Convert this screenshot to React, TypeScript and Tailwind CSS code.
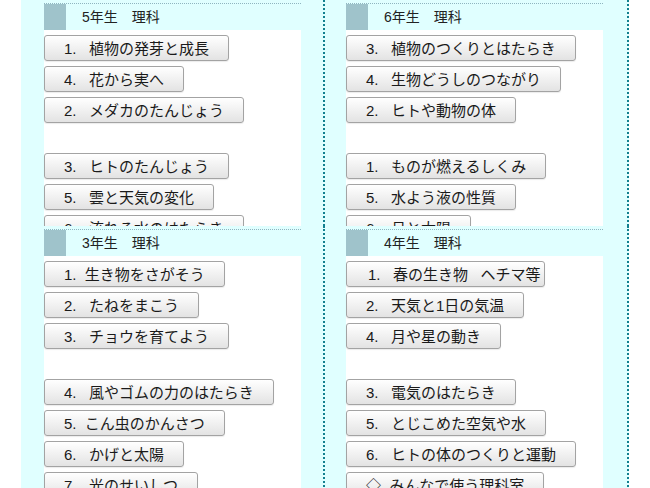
import React from "react";

type Item = { label: string; extra?: string };

type Panel = {
  title: string;
  groups: Item[][];
};

const panels: Panel[] = [
  {
    title: "5年生　理科",
    groups: [
      [
        { label: "1.   植物の発芽と成長" },
        { label: "4.   花から実へ" },
        { label: "2.   メダカのたんじょう" },
      ],
      [
        { label: "3.   ヒトのたんじょう" },
        { label: "5.   雲と天気の変化" },
        { label: "6.   流れる水のはたらき" },
        { label: "7.   もののとけ方" },
      ],
    ],
  },
  {
    title: "6年生　理科",
    groups: [
      [
        { label: "3.   植物のつくりとはたらき" },
        { label: "4.   生物どうしのつながり" },
        { label: "2.   ヒトや動物の体" },
      ],
      [
        { label: "1.   ものが燃えるしくみ" },
        { label: "5.   水よう液の性質" },
        { label: "6.   月と太陽" },
        { label: "7.   大地のつくり" },
      ],
    ],
  },
  {
    title: "3年生　理科",
    groups: [
      [
        { label: "1.  生き物をさがそう" },
        { label: "2.   たねをまこう" },
        { label: "3.   チョウを育てよう" },
      ],
      [
        { label: "4.   風やゴムの力のはたらき" },
        { label: "5.  こん虫のかんさつ" },
        { label: "6.   かげと太陽" },
        { label: "7.   光のせいしつ" },
      ],
    ],
  },
  {
    title: "4年生　理科",
    groups: [
      [
        { label: "1.   春の生き物   ヘチマ等", extra: "w-[199px] justify-start pl-[21px] pr-0" },
        { label: "2.   天気と1日の気温" },
        { label: "4.   月や星の動き" },
      ],
      [
        { label: "3.   電気のはたらき" },
        { label: "5.   とじこめた空気や水" },
        { label: "6.   ヒトの体のつくりと運動" },
        { label: "◇  みんなで使う理科室" },
      ],
    ],
  },
];

const SubjectButton = ({ item }: { item: Item }) => (
  <button
    className={
      "flex h-[26px] shrink-0 items-center justify-center whitespace-pre rounded-[3px] border border-[#a3a3a3] bg-linear-to-b from-white to-[#e3e3e3] px-[19px] text-[15px] leading-none text-[#1a1a1a] shadow-[0_1px_1px_rgba(0,0,0,0.08)] " +
      (item.extra ?? "")
    }
  >
    {item.label}
  </button>
);

const PanelBox = ({ panel, right, tall }: { panel: Panel; right: boolean; tall: boolean }) => (
  <div
    className={
      "overflow-hidden bg-[#e0ffff] pt-[3px] " +
      (tall ? "h-[300px] " : "h-[226px] ") +
      (right
        ? "border-x-2 border-dotted border-[#12808f] pl-[21px] pr-[24px]"
        : "pl-[23px] pr-[22px]")
    }
  >
    <div className="flex h-[27px] items-stretch border-t border-dotted border-[#8fb5c0]">
      <span className="w-[22px] bg-[#9fc3cb]" />
      <span className="ml-4 flex items-center text-[14px] text-[#222]">{panel.title}</span>
    </div>
    <div className="flex h-full flex-col items-start gap-[5px] bg-white pt-[5px]">
      {panel.groups.map((group, gi) => (
        <React.Fragment key={gi}>
          {gi > 0 && <div className="h-[20px] shrink-0" />}
          {group.map((item, i) => (
            <SubjectButton key={i} item={item} />
          ))}
        </React.Fragment>
      ))}
    </div>
  </div>
);

export default function App() {
  return (
    <div className="h-[488px] w-[650px] overflow-hidden bg-white font-['Liberation_Sans','Noto_Sans_CJK_JP',sans-serif]">
      <div className="ml-[21px] grid grid-cols-[302px_306px]">
        {panels.map((p, i) => (
          <PanelBox key={i} panel={p} right={i % 2 === 1} tall={i >= 2} />
        ))}
      </div>
    </div>
  );
}
